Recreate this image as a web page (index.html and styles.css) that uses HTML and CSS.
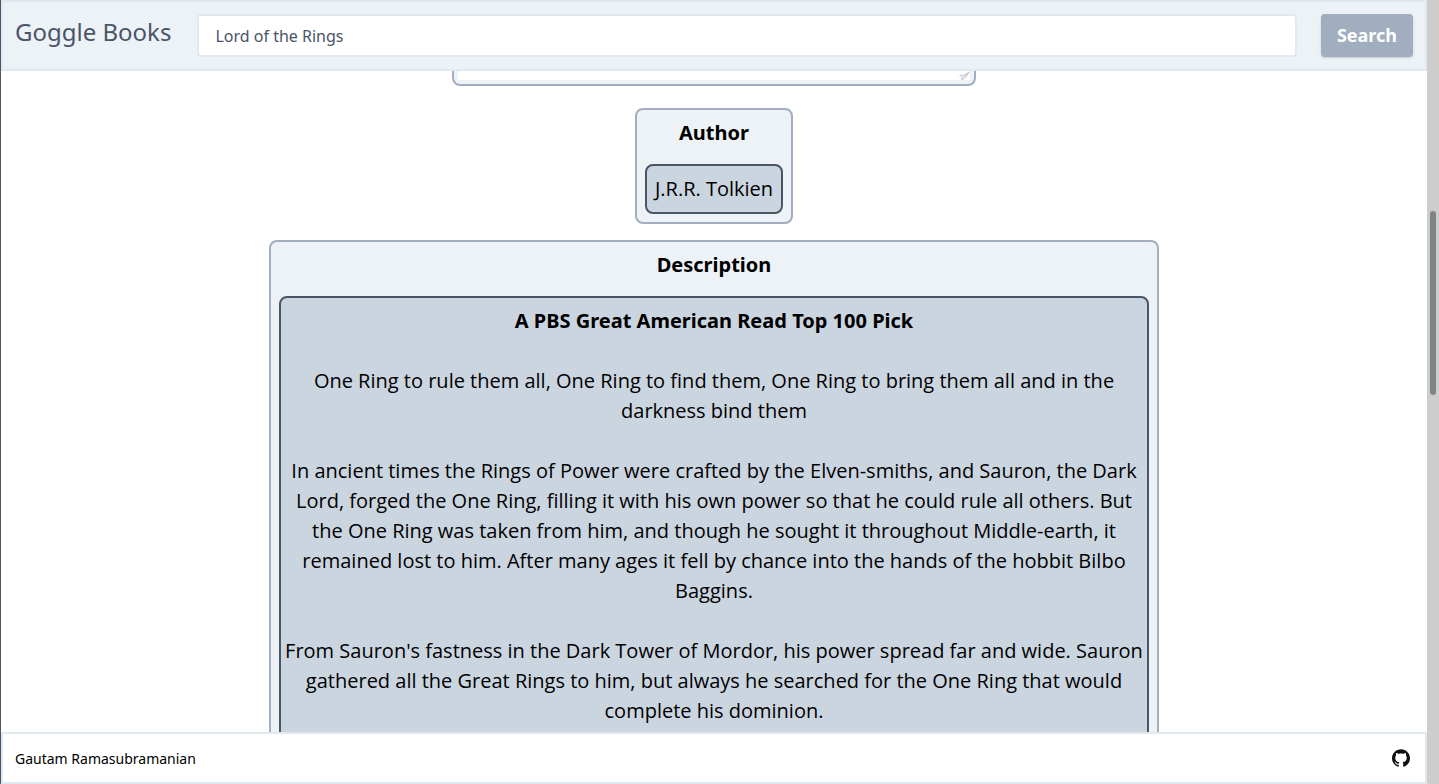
FILE: index.html
```html
<!DOCTYPE html>
<html lang="en">
<head>
<meta charset="utf-8">
<meta name="viewport" content="width=device-width, initial-scale=1">
<title>Goggle Books</title>
<link rel="stylesheet" href="styles.css">
</head>
<body>
<div class="app">
  <header class="header">
    <h1 class="brand">Goggle Books</h1>
    <form class="search">
      <input class="search-input" type="text" aria-label="Search books" value="Lord of the Rings">
      <button class="search-button" type="button">Search</button>
    </form>
  </header>
  <main class="content">
    <section class="preview" aria-label="Book cover">
      <div class="preview-page">
        <svg class="page-curl" width="12" height="10" viewBox="0 0 12 10" aria-hidden="true">
          <path d="M1.5 4.5 L7 3.5 L11.5 0.8 L9 5 L5.5 8.5 L3 8 Z" fill="#eeedf3"/>
          <path d="M1.5 4.5 L6 4.2 L11.5 0.8 L8.5 5.5 L5.5 8.5 L3 8 L10 2.4" fill="none" stroke="#bdb9c8" stroke-width="0.7"/>
        </svg>
      </div>
    </section>
    <section class="card">
      <h2 class="card-title">Author</h2>
      <div class="card-body">J.R.R. Tolkien</div>
    </section>
    <section class="card card-wide">
      <h2 class="card-title">Description</h2>
      <div class="card-body description">
        <p><b>A PBS Great American Read Top 100 Pick</b></p>
        <p>One Ring to rule them all, One Ring to find them, One Ring to bring them all and in the<br>darkness bind them</p>
        <p>In ancient times the Rings of Power were crafted by the Elven-smiths, and Sauron, the Dark<br>Lord, forged the One Ring, filling it with his own power so that he could rule all others. But<br>the One Ring was taken from him, and though he sought it throughout Middle-earth, it<br>remained lost to him. After many ages it fell by chance into the hands of the hobbit Bilbo<br>Baggins.</p>
        <p>From Sauron's fastness in the Dark Tower of Mordor, his power spread far and wide. Sauron<br>gathered all the Great Rings to him, but always he searched for the One Ring that would<br>complete his dominion.</p>
      </div>
    </section>
  </main>
  <footer class="footer">
    <span>Gautam Ramasubramanian</span>
    <a class="github" href="#" aria-label="GitHub">
      <svg width="18" height="18" viewBox="0 0 24 24" aria-hidden="true"><path fill="#111" d="M12 .297c-6.63 0-12 5.373-12 12 0 5.303 3.438 9.8 8.205 11.385.6.113.82-.258.82-.577 0-.285-.01-1.04-.015-2.04-3.338.724-4.042-1.61-4.042-1.61C4.422 18.07 3.633 17.7 3.633 17.7c-1.087-.744.084-.729.084-.729 1.205.084 1.838 1.236 1.838 1.236 1.07 1.835 2.809 1.305 3.495.998.108-.776.417-1.305.76-1.605-2.665-.3-5.466-1.332-5.466-5.93 0-1.31.465-2.38 1.235-3.22-.135-.303-.54-1.523.105-3.176 0 0 1.005-.322 3.3 1.23.96-.267 1.98-.399 3-.405 1.02.006 2.04.138 3 .405 2.28-1.552 3.285-1.23 3.285-1.23.645 1.653.24 2.873.12 3.176.765.84 1.23 1.91 1.23 3.22 0 4.61-2.805 5.625-5.475 5.92.42.36.81 1.096.81 2.22 0 1.606-.015 2.896-.015 3.286 0 .315.21.69.825.57C20.565 22.092 24 17.592 24 12.297c0-6.627-5.373-12-12-12"/></svg>
    </a>
  </footer>
</div>
<div class="scrollbar" aria-hidden="true"><div class="scrollbar-thumb"></div></div>
</body>
</html>
```
FILE: styles.css
```css
* { box-sizing: border-box; }

body {
  margin: 0;
  height: 100vh;
  display: flex;
  overflow: hidden;
  border-left: 1px solid #4a5568;
  background: #fff;
  color: #000;
  font-family: "Noto Sans", sans-serif;
}

h1, h2, p { margin: 0; }

.app {
  flex: 1;
  min-width: 0;
  display: flex;
  flex-direction: column;
}

.header {
  display: flex;
  align-items: center;
  gap: 26px;
  padding: 12px;
  border: 2px solid #e2e8f0;
  background: #edf2f7;
}

.brand {
  padding-bottom: 7px;
  color: #4a5568;
  font-size: 24px;
  line-height: 36px;
  font-weight: 400;
  white-space: nowrap;
}

.search {
  flex: 1;
  min-width: 0;
  display: flex;
  gap: 24px;
}

.search-input {
  flex: 1;
  min-width: 0;
  height: 43px;
  padding: 0 16px;
  border: 2px solid #e2e8f0;
  border-radius: 4px;
  background: #fff;
  color: #4a5568;
  font: 16px/24px "Noto Sans", sans-serif;
}

.search-button {
  padding: 8px 16px;
  border: 0;
  border-radius: 4px;
  background: #a0aec0;
  box-shadow: 0 1px 3px rgba(0, 0, 0, 0.1), 0 1px 2px rgba(0, 0, 0, 0.06);
  color: #fff;
  font: 700 18px/27px "Noto Sans", sans-serif;
}

.content {
  flex: 1;
  min-height: 0;
  overflow: hidden;
  display: flex;
  flex-direction: column;
  align-items: center;
  gap: 16px;
  font-size: 20px;
  line-height: 30px;
}

.preview {
  flex-shrink: 0;
  width: 100%;
  max-width: 524px;
  margin-bottom: 6px;
  padding: 0 4px 4px;
  border: 2px solid #a0aec0;
  border-top: 0;
  border-radius: 0 0 8px 8px;
  background: #edf2f7;
}

.preview-page {
  display: flex;
  justify-content: flex-end;
  height: 9px;
  background: #fff;
}

.card {
  flex-shrink: 0;
  padding: 8px;
  border: 2px solid #a0aec0;
  border-radius: 8px;
  background: #edf2f7;
  text-align: center;
}

.card-wide {
  width: 100%;
  max-width: 890px;
}

.card-title {
  margin-bottom: 16px;
  font-size: 20px;
  font-weight: 700;
}

.card-body {
  padding: 8px;
  border: 2px solid #4a5568;
  border-radius: 8px;
  background: #cbd5e0;
  font-family: "Open Sans", "Noto Sans", sans-serif;
}

.description {
  display: grid;
  gap: 30px;
  padding: 8px 0 30px;
}

.description b { font-family: "Noto Sans", sans-serif; }

.footer {
  display: flex;
  align-items: center;
  justify-content: space-between;
  height: 52px;
  padding: 0 15px 0 12px;
  border: 2px solid #e2e8f0;
  background: #fff;
  font-size: 14px;
  line-height: 21px;
}

.github { display: flex; }

.scrollbar {
  width: 12px;
  padding: 211px 3px 0;
  background: #cdcdcd;
}

.scrollbar-thumb {
  height: 184px;
  border-radius: 3px;
  background: #7f8584;
}
```
